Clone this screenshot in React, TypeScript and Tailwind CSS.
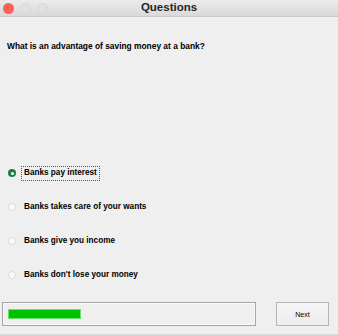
const options = [
  'Banks pay interest',
  'Banks takes care of your wants',
  'Banks give you income',
  "Banks don't lose your money",
]

function Radio({ checked }: { checked: boolean }) {
  if (checked) {
    return (
      <span className="flex h-[8px] w-[8px] shrink-0 items-center justify-center rounded-full bg-[#1f7a4a]">
        <span className="h-[3px] w-[3px] rounded-full bg-white" />
      </span>
    )
  }
  return <span className="h-[8px] w-[8px] shrink-0 rounded-full border border-[#dcdcdc] bg-[#fbfbfb]" />
}

export default function App() {
  return (
    <div
      className="flex h-[335px] w-[338px] flex-col overflow-hidden bg-[#efefef] text-black"
      style={{ fontFamily: '"Liberation Sans", Arial, sans-serif' }}
    >
      {/* title bar */}
      <div className="relative flex h-[17px] shrink-0 items-center justify-center border-b border-[#c8c8c8] bg-gradient-to-b from-[#ebebeb] to-[#d9d9d9]">
        <div className="absolute left-[3px] top-[3px] flex gap-[6px]">
          <span className="h-[11px] w-[11px] rounded-full bg-[#fc5f57]" />
          <span className="h-[11px] w-[11px] rounded-full border border-[#d6d6d6] bg-[#e0e0e0]" />
          <span className="h-[11px] w-[11px] rounded-full border border-[#d6d6d6] bg-[#e0e0e0]" />
        </div>
        <span className="text-[11.5px] font-bold leading-none text-[#262626]">Questions</span>
      </div>

      <div className="pl-[7px] pt-[25px] text-[8.4px] font-bold leading-none">
        What is an advantage of saving money at a bank?
      </div>

      <div className="mt-[118px] flex flex-col gap-[24px] pl-[8px]">
        {options.map((o, i) => (
          <div key={o} className="flex h-[10px] items-center gap-[5px]">
            <Radio checked={i === 0} />
            <span
              className={
                'text-[8.2px] font-bold leading-none ' +
                (i === 0 ? 'border border-dotted border-[#555] px-[2px] py-[2px]' : 'px-[3px]')
              }
            >
              {o}
            </span>
          </div>
        ))}
      </div>

      <div className="mt-[22px] flex items-center gap-[20px] pl-[2px]">
        <div className="flex h-[24px] w-[254px] items-center border border-[#a5a5a5] bg-[#efefef] px-[5px] shadow-[inset_0_0_0_1px_#f8f8f8]">
          <div className="h-[10px] w-[73px] border border-[#6ee06e] bg-[#00c000]" />
        </div>
        <button className="flex h-[24px] w-[53px] items-center justify-center border border-[#b5b5b5] bg-gradient-to-b from-[#f6f6f6] to-[#ececec] text-[7px] leading-none">
          Next
        </button>
      </div>
      <div className="mt-auto h-[1px] w-full bg-[#dadada]" />
    </div>
  )
}
